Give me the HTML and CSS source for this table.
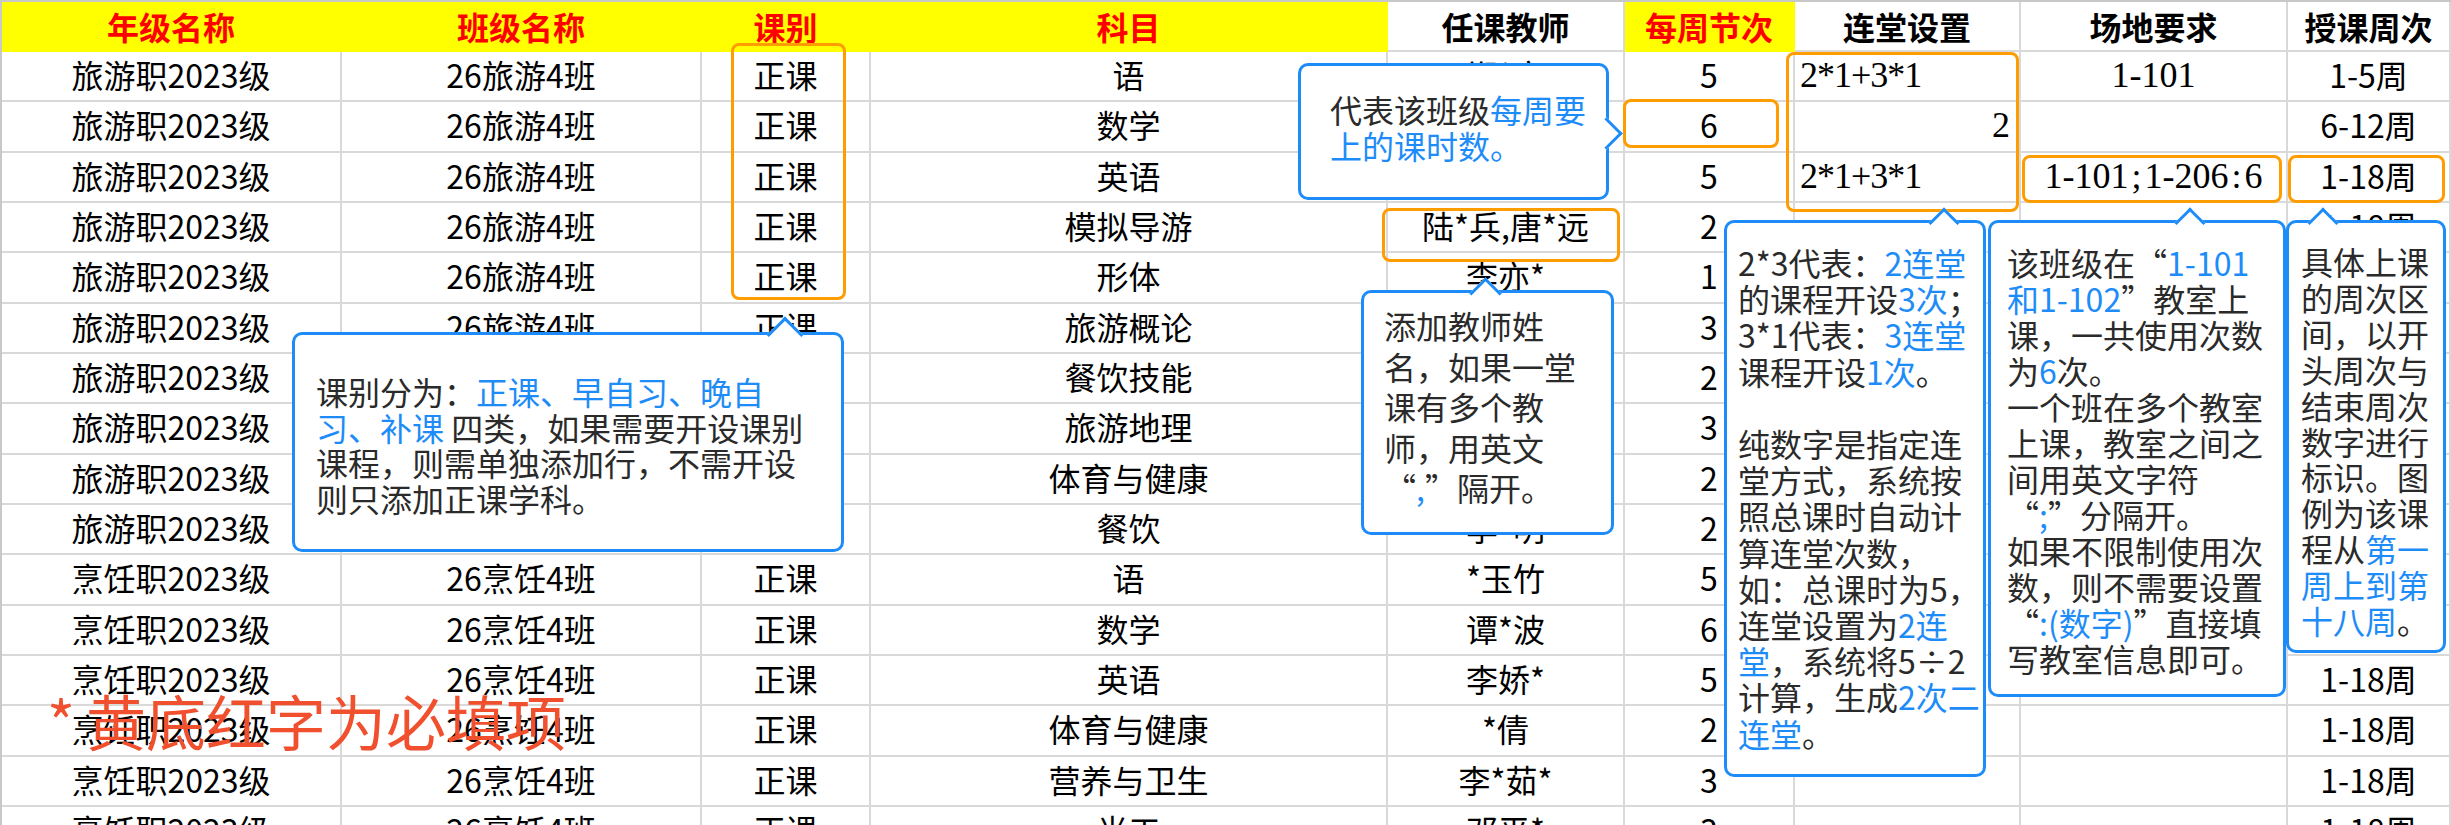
FILE: index.html
```html
<!DOCTYPE html>
<html lang="zh-CN">
<head>
<meta charset="utf-8">
<title>排课导入模板</title>
<link rel="stylesheet" href="styles.css">
</head>
<body>
<div class="page">
  <div class="sheet">
    <div class="cell hd y">年级名称</div>
    <div class="cell hd y">班级名称</div>
    <div class="cell hd y">课别</div>
    <div class="cell hd y">科目</div>
    <div class="cell hd">任课教师</div>
    <div class="cell hd y">每周节次</div>
    <div class="cell hd">连堂设置</div>
    <div class="cell hd">场地要求</div>
    <div class="cell hd">授课周次</div>

    <div class="cell">旅游职2023级</div><div class="cell">26旅游4班</div><div class="cell">正课</div><div class="cell">语</div><div class="cell">郑*文</div><div class="cell">5</div><div class="cell sf l">2*1+3*1</div><div class="cell sf">1-101</div><div class="cell">1-5周</div>
    <div class="cell">旅游职2023级</div><div class="cell">26旅游4班</div><div class="cell">正课</div><div class="cell">数学</div><div class="cell">王*丽</div><div class="cell">6</div><div class="cell sf r">2</div><div class="cell"></div><div class="cell">6-12周</div>
    <div class="cell">旅游职2023级</div><div class="cell">26旅游4班</div><div class="cell">正课</div><div class="cell">英语</div><div class="cell">张*华</div><div class="cell">5</div><div class="cell sf l">2*1+3*1</div><div class="cell sf wide">1-101<span class="p">;</span>1-206<span class="p">:</span>6</div><div class="cell">1-18周</div>
    <div class="cell">旅游职2023级</div><div class="cell">26旅游4班</div><div class="cell">正课</div><div class="cell">模拟导游</div><div class="cell">陆*兵,唐*远</div><div class="cell">2</div><div class="cell"></div><div class="cell"></div><div class="cell">1-18周</div>
    <div class="cell">旅游职2023级</div><div class="cell">26旅游4班</div><div class="cell">正课</div><div class="cell">形体</div><div class="cell">李亦*</div><div class="cell">1</div><div class="cell"></div><div class="cell"></div><div class="cell">1-18周</div>
    <div class="cell">旅游职2023级</div><div class="cell">26旅游4班</div><div class="cell">正课</div><div class="cell">旅游概论</div><div class="cell">周*军</div><div class="cell">3</div><div class="cell"></div><div class="cell"></div><div class="cell">1-18周</div>
    <div class="cell">旅游职2023级</div><div class="cell">26旅游4班</div><div class="cell">正课</div><div class="cell">餐饮技能</div><div class="cell">刘*芳</div><div class="cell">2</div><div class="cell"></div><div class="cell"></div><div class="cell">1-18周</div>
    <div class="cell">旅游职2023级</div><div class="cell">26旅游4班</div><div class="cell">正课</div><div class="cell">旅游地理</div><div class="cell">陈*平</div><div class="cell">3</div><div class="cell"></div><div class="cell"></div><div class="cell">1-18周</div>
    <div class="cell">旅游职2023级</div><div class="cell">26旅游4班</div><div class="cell">正课</div><div class="cell">体育与健康</div><div class="cell">赵*强</div><div class="cell">2</div><div class="cell"></div><div class="cell"></div><div class="cell">1-18周</div>
    <div class="cell">旅游职2023级</div><div class="cell">26旅游4班</div><div class="cell">正课</div><div class="cell">餐饮</div><div class="cell">李*明</div><div class="cell">2</div><div class="cell"></div><div class="cell"></div><div class="cell">1-18周</div>
    <div class="cell">烹饪职2023级</div><div class="cell">26烹饪4班</div><div class="cell">正课</div><div class="cell">语</div><div class="cell">*玉竹</div><div class="cell">5</div><div class="cell"></div><div class="cell"></div><div class="cell">1-18周</div>
    <div class="cell">烹饪职2023级</div><div class="cell">26烹饪4班</div><div class="cell">正课</div><div class="cell">数学</div><div class="cell">谭*波</div><div class="cell">6</div><div class="cell"></div><div class="cell"></div><div class="cell">1-18周</div>
    <div class="cell">烹饪职2023级</div><div class="cell">26烹饪4班</div><div class="cell">正课</div><div class="cell">英语</div><div class="cell">李娇*</div><div class="cell">5</div><div class="cell"></div><div class="cell"></div><div class="cell">1-18周</div>
    <div class="cell">烹饪职2023级</div><div class="cell">26烹饪4班</div><div class="cell">正课</div><div class="cell">体育与健康</div><div class="cell">*倩</div><div class="cell">2</div><div class="cell"></div><div class="cell"></div><div class="cell">1-18周</div>
    <div class="cell">烹饪职2023级</div><div class="cell">26烹饪4班</div><div class="cell">正课</div><div class="cell">营养与卫生</div><div class="cell">李*茹*</div><div class="cell">3</div><div class="cell"></div><div class="cell"></div><div class="cell">1-18周</div>
    <div class="cell">烹饪职2023级</div><div class="cell">26烹饪4班</div><div class="cell">正课</div><div class="cell">光工</div><div class="cell">邓平*</div><div class="cell">3</div><div class="cell"></div><div class="cell"></div><div class="cell">1-18周</div>
  </div>

  <div class="mark m-type"></div>
  <div class="mark m-hours"></div>
  <div class="mark m-teacher"></div>
  <div class="mark m-lian"></div>
  <div class="mark m-room"></div>
  <div class="mark m-week"></div>

  <div class="tip tip-type">课别分为：<span class="hl">正课、早自习、晚自</span><br><span class="hl">习、补课</span> 四类，如果需要开设课别<br>课程，则需单独添加行，不需开设<br>则只添加正课学科。</div>

  <div class="tip tip-hours">代表该班级<span class="hl">每周要<br>上的课时数。</span></div>

  <div class="tip tip-teacher">添加教师姓<br>名，如果一堂<br>课有多个教<br>师，用英文<br>“<span class="hl">,</span>”隔开。</div>

  <div class="tip tip-lian">2*3代表：<span class="hl">2连堂</span><br>的课程开设<span class="hl">3次</span>；<br>3*1代表：<span class="hl">3连堂</span><br>课程开设<span class="hl">1次</span>。<br><br>纯数字是指定连<br>堂方式，系统按<br>照总课时自动计<br>算连堂次数，<br>如：总课时为5，<br>连堂设置为<span class="hl">2连</span><br><span class="hl">堂</span>，系统将5÷2<br>计算，生成<span class="hl">2次二</span><br><span class="hl">连堂</span>。</div>

  <div class="tip tip-room">该班级在“<span class="hl">1-101</span><br><span class="hl">和1-102</span>”教室上<br>课，一共使用次数<br>为<span class="hl">6</span>次。<br>一个班在多个教室<br>上课，教室之间之<br>间用英文字符<br>“<span class="hl">;</span>”分隔开。<br>如果不限制使用次<br>数，则不需要设置<br>“<span class="hl">:(数字)</span>”直接填<br>写教室信息即可。</div>

  <div class="tip tip-week">具体上课<br>的周次区<br>间，以开<br>头周次与<br>结束周次<br>数字进行<br>标识。图<br>例为该课<br>程从<span class="hl">第一</span><br><span class="hl">周上到第</span><br><span class="hl">十八周</span>。</div>

  <div class="note"><span class="star">*</span>黄底红字为必填项</div>
</div>
</body>
</html>
```

FILE: styles.css
```css
* {
  box-sizing: border-box;
}

body {
  margin: 0;
  background: #ffffff;
  font-family: "Noto Sans CJK SC", "Noto Sans", sans-serif;
}

.page {
  position: relative;
  width: 2451px;
  height: 825px;
  overflow: hidden;
}

/* ---------- spreadsheet grid ---------- */
.sheet {
  display: grid;
  grid-template-columns: 340px 360px 169px 517px 237px 170px 226px 267px 163px;
  grid-template-rows: 50px;
  grid-auto-rows: 50.33px;
  border-top: 2px solid #c8c8c8;
  border-left: 2px solid #c8c8c8;
}

.cell {
  display: flex;
  align-items: center;
  justify-content: center;
  border-right: 2px solid #d9d9d9;
  border-bottom: 2px solid #d9d9d9;
  padding-bottom: 4px;
  font-size: 32px;
  line-height: 1;
  color: #000000;
  white-space: nowrap;
  overflow: hidden;
}

.hd {
  font-weight: 700;
  padding-bottom: 0;
  background: #ffffff;
}

.hd.y {
  background: #ffff00;
  color: #ff0000;
  border-right-color: #ffff00;
  border-bottom-color: #ffff00;
}

.sf {
  font-family: "Liberation Serif", "Times New Roman", serif;
  font-size: 36px;
  padding-bottom: 2px;
}

.sf.l {
  justify-content: flex-start;
  padding-left: 5px;
  letter-spacing: -1px;
}

.sf.r {
  justify-content: flex-end;
  padding-right: 9px;
}

.sf .p {
  margin: 0 3px;
}

/* ---------- orange highlight frames ---------- */
.mark {
  position: absolute;
  border: 3px solid #ff9c00;
  border-radius: 8px;
}

.m-type    { left: 731px;  top: 43px;  width: 115px; height: 257px; }
.m-hours   { left: 1623px; top: 99px;  width: 156px; height: 49px; }
.m-teacher { left: 1382px; top: 208px; width: 238px; height: 54px; }
.m-lian    { left: 1786px; top: 52px;  width: 233px; height: 160px; }
.m-room    { left: 2022px; top: 155px; width: 260px; height: 48px; }
.m-week    { left: 2288px; top: 155px; width: 157px; height: 48px; }

/* ---------- blue callouts ---------- */
.tip {
  position: absolute;
  background: #ffffff;
  border: 3px solid #1e8cf8;
  border-radius: 10px;
  font-size: 32px;
  line-height: 36px;
  color: #2a2a2a;
  white-space: nowrap;
}

.tip .hl {
  color: #1e8cf8;
}

.tip::before {
  content: "";
  position: absolute;
  width: var(--s);
  height: var(--s);
  background: #ffffff;
  border-top: 3px solid #1e8cf8;
  border-left: 3px solid #1e8cf8;
  transform: rotate(45deg);
}

.tip-type {
  left: 292px; top: 332px; width: 552px; height: 220px;
  padding: 39px 0 0 21px;
  line-height: 35.5px;
  --s: 23px;
}
.tip-type::before { left: 477px; top: -13px; }

.tip-hours {
  left: 1298px; top: 63px; width: 311px; height: 137px;
  padding: 25px 0 0 29px;
  --s: 20px;
}
.tip-hours::before {
  border-left: none;
  border-right: 3px solid #1e8cf8;
  right: -11.5px;
  top: 56px;
}

.tip-teacher {
  left: 1361px; top: 290px; width: 253px; height: 245px;
  padding: 12px 0 0 20px;
  line-height: 40.5px;
  --s: 20px;
}
.tip-teacher::before { left: 110px; top: -11.5px; }

.tip-lian {
  left: 1724px; top: 220px; width: 262px; height: 557px;
  padding: 21px 0 0 11px;
  line-height: 36.2px;
  --s: 19px;
}
.tip-lian::before { left: 206px; top: -11px; }

.tip-room {
  left: 1988px; top: 220px; width: 298px; height: 477px;
  padding: 21px 0 0 16px;
  --s: 19px;
}
.tip-room::before { left: 188px; top: -11px; }

.tip-week {
  left: 2286px; top: 220px; width: 160px; height: 433px;
  padding: 21px 0 0 12px;
  line-height: 35.9px;
  --s: 19px;
}
.tip-week::before { left: 23px; top: -11px; }

/* ---------- required-field note ---------- */
.note {
  position: absolute;
  left: 47px;
  top: 690px;
  font-size: 60px;
  line-height: 60px;
  color: #f0502d;
  white-space: nowrap;
}

.note .star {
  margin-right: 11px;
}
```
